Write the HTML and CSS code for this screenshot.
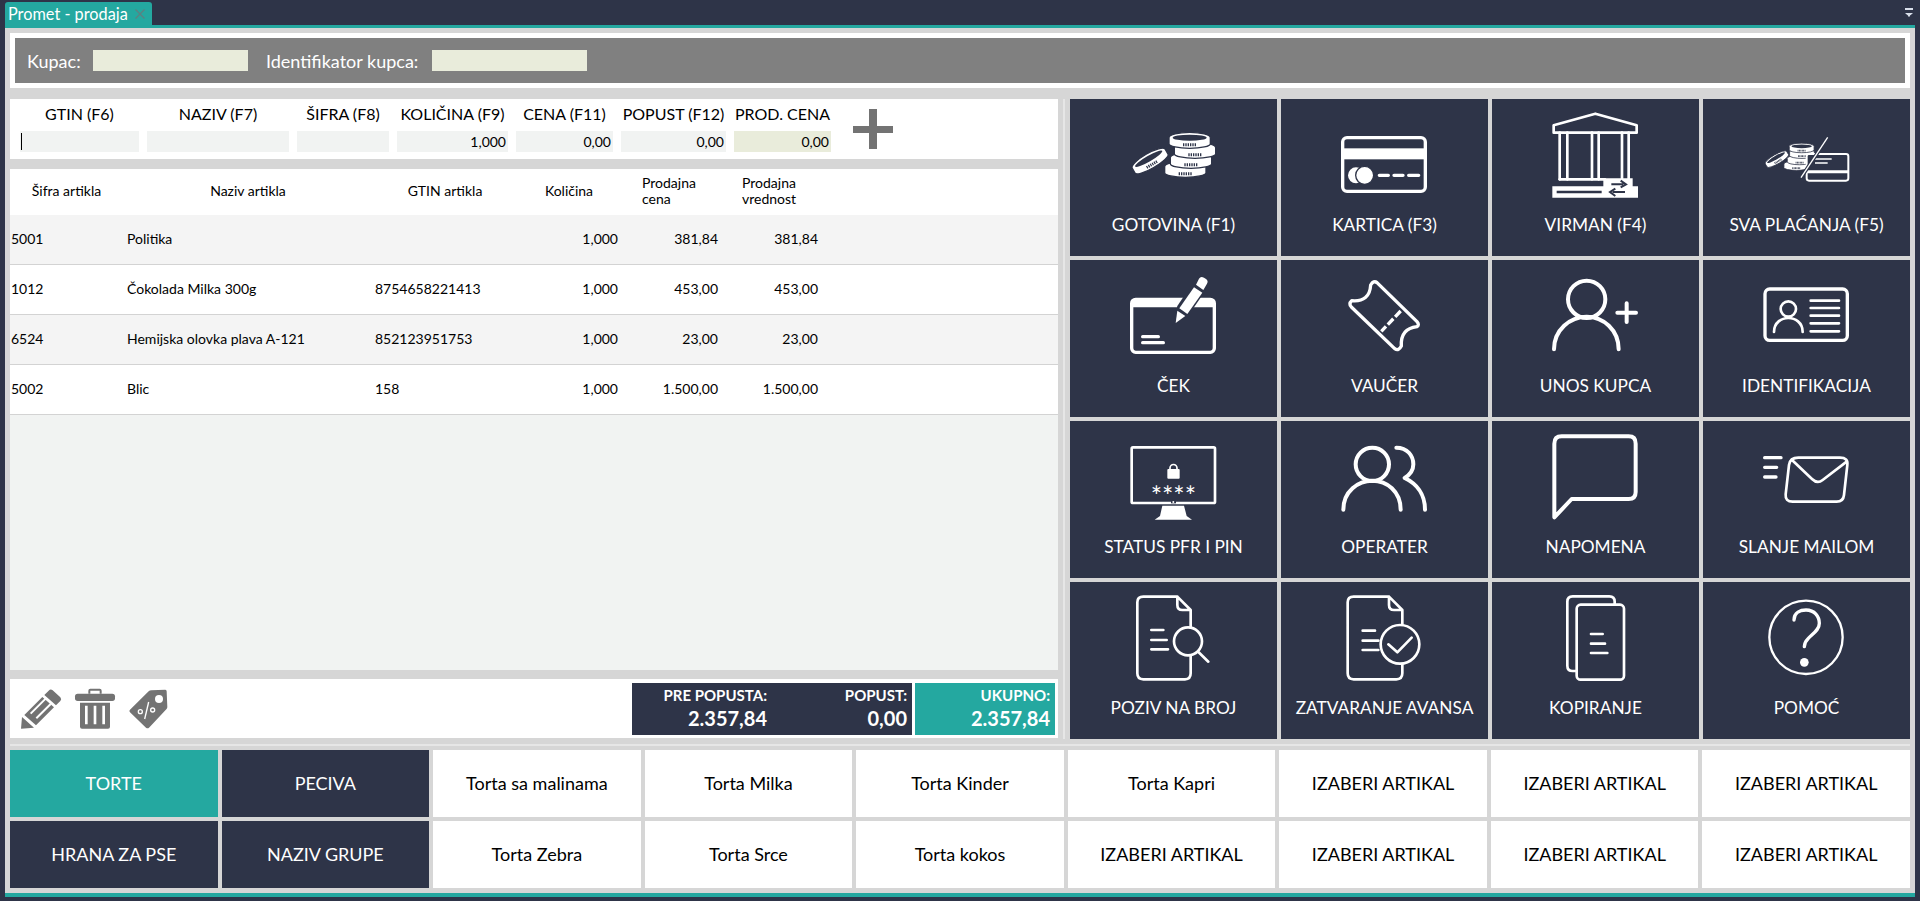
FILE: index.html
```html
<!DOCTYPE html>
<html lang="sr">
<head>
<meta charset="utf-8">
<title>Promet - prodaja</title>
<link rel="stylesheet" href="styles.css">
</head>
<body>
<svg class="defs" width="0" height="0" aria-hidden="true">
  <defs>
    <g id="coin">
      <path d="M-62 0A62 16 0 0 1 62 0V18A62 14 0 0 1-62 18Z" fill="#fff" stroke="#2e3448" stroke-width="4"/>
      <ellipse cx="0" cy="0" rx="51" ry="9" fill="#2e3448"/>
      <path d="M-20 21H20" stroke="#2e3448" stroke-width="9" stroke-dasharray="4 3"/>
    </g>
    <g id="coin-low">
      <path d="M-62 0A62 16 0 0 1 62 0V18A62 14 0 0 1-62 18Z" fill="#fff" stroke="#2e3448" stroke-width="4"/>
      <path d="M-20 21H20" stroke="#2e3448" stroke-width="9" stroke-dasharray="4 3"/>
    </g>
  </defs>
</svg>
<header class="tabbar">
  <div class="tab"><span>Promet - prodaja</span><svg class="tab-close" viewBox="0 0 10 10"><path d="M0.500 0.500 9.500 9.500M9.500 0.500 0.500 9.500"/></svg></div>
  <svg class="menu-icon" viewBox="0 0 8 9"><path d="M0 0H8V2H0ZM0 5H8L5.500 7.200H5V8.500H3V7.200H2.500Z" fill="#d9dfea"/></svg>
</header>
<main class="frame">
  <section class="customer">
    <div class="customer-inner">
      <label class="customer-label">Kupac:</label><div class="customer-field"></div>
      <label class="customer-label second">Identifikator kupca:</label><div class="customer-field"></div>
    </div>
  </section>
  <div class="main">
    <div class="left">
      <section class="entry">
        <div class="entry-col w1"><div class="entry-label">GTIN (F6)</div><div class="field"><i class="caret"></i></div></div>
        <div class="entry-col w2"><div class="entry-label">NAZIV (F7)</div><div class="field"></div></div>
        <div class="entry-col w3"><div class="entry-label">ŠIFRA (F8)</div><div class="field"></div></div>
        <div class="entry-col w4"><div class="entry-label">KOLIČINA (F9)</div><div class="field">1,000</div></div>
        <div class="entry-col w5"><div class="entry-label">CENA (F11)</div><div class="field">0,00</div></div>
        <div class="entry-col w6"><div class="entry-label">POPUST (F12)</div><div class="field">0,00</div></div>
        <div class="entry-col w7"><div class="entry-label">PROD. CENA</div><div class="field tinted">0,00</div></div>
        <div class="plus"></div>
      </section>
      <section class="items">
        <div class="row head">
          <div class="c">Šifra artikla</div><div class="c">Naziv artikla</div><div class="c">GTIN artikla</div><div class="c">Količina</div><div class="hl">Prodajna<br>cena</div><div class="hl">Prodajna<br>vrednost</div>
        </div>
        <div class="row odd"><div class="first">5001</div><div class="name">Politika</div><div class="gtin"></div><div class="r">1,000</div><div class="r">381,84</div><div class="r">381,84</div></div>
        <div class="row"><div class="first">1012</div><div class="name">Čokolada Milka 300g</div><div class="gtin">8754658221413</div><div class="r">1,000</div><div class="r">453,00</div><div class="r">453,00</div></div>
        <div class="row odd"><div class="first">6524</div><div class="name">Hemijska olovka plava A-121</div><div class="gtin">852123951753</div><div class="r">1,000</div><div class="r">23,00</div><div class="r">23,00</div></div>
        <div class="row"><div class="first">5002</div><div class="name">Blic</div><div class="gtin">158</div><div class="r">1,000</div><div class="r">1.500,00</div><div class="r">1.500,00</div></div>
      </section>
      <section class="actions">
        <svg class="act" viewBox="60 85 127 125"><path d="M146 93Q152 87 158 92L181 113Q186 119 181 124L168 137 133 106ZM127 112 162 143 108 197 73 166ZM66 172 102 204 63 207Z" fill="#737373"/><path d="M92 162 137 117M109 176 152 133" stroke="#fff" stroke-width="6"/></svg>
        <svg class="act" viewBox="222 85 127 125"><path d="M268 102V93Q268 90 271 90H299Q302 90 302 93V102" fill="none" stroke="#737373" stroke-width="6"/><rect x="225" y="102" width="120" height="22" rx="8" fill="#737373"/><path d="M240 129H330V201Q330 207 324 207H246Q240 207 240 201Z" fill="#737373"/><path d="M259 138V194M285 138V194M311 138V194" stroke="#fff" stroke-width="8"/></svg>
        <svg class="act" viewBox="385 85 127 125"><path d="M447 95Q450 92 455 92L497 90Q501 90 501 95L503 142Q503 146 500 149L448 204Q444 208 439 204L391 158Q387 154 391 150Z" fill="#737373"/><circle cx="478" cy="118" r="12" fill="#fff"/><circle cx="422" cy="156" r="6" fill="none" stroke="#fff" stroke-width="4"/><circle cx="459" cy="151" r="6" fill="none" stroke="#fff" stroke-width="4"/><path d="M447 127 435 178" stroke="#fff" stroke-width="4"/></svg>
        <div class="totals">
          <div class="total dark"><b>PRE POPUSTA:</b><strong>2.357,84</strong></div>
          <div class="total dark"><b>POPUST:</b><strong>0,00</strong></div>
          <div class="total teal"><b>UKUPNO:</b><strong>2.357,84</strong></div>
        </div>
      </section>
    </div>
    <div class="vsplit"></div>
    <nav class="pay">
      <button class="pay-btn"><svg viewBox="30 27 621 375"><use href="#coin-low" transform="translate(376 230)"/><use href="#coin-low" transform="translate(393 203)"/><use href="#coin-low" transform="translate(405 173)"/><use href="#coin" transform="translate(389 143)"/><use href="#coin" transform="translate(266 206) rotate(-30) scale(.92 .95)"/></svg><span>GOTOVINA (F1)</span></button>
      <button class="pay-btn"><svg viewBox="663 27 621 375"><rect x="848" y="143" width="248" height="161" rx="13" class="ln10"/><rect x="848" y="175" width="248" height="33" fill="#fff"/><circle cx="888" cy="256" r="24" fill="#fff"/><circle cx="914" cy="256" r="27" fill="#fff" stroke="#2e3448" stroke-width="4"/><path d="M958 256H985M1002 256H1029M1046 256H1076" class="ln10"/></svg><span>KARTICA (F3)</span></button>
      <button class="pay-btn"><svg viewBox="6 27 621 375"><path d="M191 106 316 71 440 106V128H191Z" class="ln8"/><path d="M209 128V268M232 128V268M306 128V268M326 128V268M396 128V268M416 128V268" class="ln8"/><path d="M209 268H345" class="ln8"/><path d="M187 289H340V265H428V289H444V323H187Z" fill="#fff"/><path d="M200 306H335" stroke="#2e3448" stroke-width="8"/><path d="M364 283H400M392 272 408 283 392 292M405 306H368M376 296 360 306 376 318" fill="none" stroke="#2e3448" stroke-width="6"/></svg><span>VIRMAN (F4)</span></button>
      <button class="pay-btn"><svg viewBox="639 27 621 375"><use href="#coin-low" transform="translate(919 222) scale(.6)"/><use href="#coin-low" transform="translate(929 205) scale(.6)"/><use href="#coin-low" transform="translate(936 186) scale(.6)"/><use href="#coin" transform="translate(935 169) scale(.6)"/><use href="#coin" transform="translate(858 203) rotate(-30) scale(.6)"/><rect x="950" y="192" width="125" height="80" rx="7" fill="#2e3448" stroke="#fff" stroke-width="6"/><path d="M950 245H1075" stroke="#fff" stroke-width="9"/><path d="M975 207H1025M975 219H1013" stroke="#fff" stroke-width="4"/><path d="M1012 144 934 262" stroke="#2e3448" stroke-width="11"/><path d="M1013 142 933 263" stroke="#fff" stroke-width="4"/></svg><span>SVA PLAĆANJA (F5)</span></button>

      <button class="pay-btn"><svg viewBox="30 510 621 375"><rect x="215" y="628" width="248" height="159" rx="12" class="ln10"/><path d="M215 640Q215 624 232 624H446Q463 624 463 640V652H215Z" fill="#fff"/><path d="M248 740H295M248 758H310" class="ln10"/><path d="M338 706 352 648 410 562 446 588 388 672Z" fill="#2e3448"/><path d="M347 699 352 662 376 678Z" fill="#fff"/><path d="M358 655 402 592 427 608 382 672Z" fill="#fff"/><path d="M408 584 417 566Q422 558 432 563L438 567Q446 573 441 581L430 600Z" fill="#fff"/></svg><span>ČEK</span></button>
      <button class="pay-btn"><svg viewBox="663 510 621 375"><path d="M951 578 1071 695Q1079 704 1071 710 1021 716 1024 768 1016 784 1004 776L874 651Q865 641 875 632 929 637 932 585 941 570 951 578Z" class="ln10"/><path d="M1022 663 964 724" class="ln10 dash"/></svg><span>VAUČER</span></button>
      <button class="pay-btn"><svg viewBox="6 510 621 375"><circle cx="290" cy="628" r="56" class="ln12"/><path d="M192 778C192 720 240 680 290 680 340 680 386 720 386 778M382 668H438M410 640V696" class="ln12"/></svg><span>UNOS KUPCA</span></button>
      <button class="pay-btn"><svg viewBox="639 510 621 375"><rect x="825" y="597" width="247" height="154" rx="14" class="ln10"/><circle cx="895" cy="657" r="23" class="ln8"/><path d="M852 726C852 697 875 684 895 684 915 684 938 697 938 726M962 632H1047M962 654H1047M962 677H1047M962 700H1047M962 724H1047" class="ln8"/></svg><span>IDENTIFIKACIJA</span></button>

      <button class="pay-btn"><svg viewBox="30 18 621 375"><rect x="215" y="97" width="250" height="167" rx="4" class="ln8"/><rect x="322" y="162" width="37" height="29" rx="3" fill="#fff"/><path d="M330 164V159A10 10 0 0 1 351 159V164" fill="none" stroke="#fff" stroke-width="5"/><text x="340" y="274" class="stars">****</text><path d="M333 258H348V265H333Z" fill="#2e3448"/><circle cx="340" cy="261" r="3" fill="#fff"/><path d="M307 272H372L380 303 396 314H284L300 303Z" fill="#fff"/></svg><span>STATUS PFR I PIN</span></button>
      <button class="pay-btn"><svg viewBox="663 18 621 375"><circle cx="937" cy="148" r="50" class="ln12"/><path d="M850 284C850 228 895 197 937 197 980 197 1022 228 1022 284M1009 98C1042 98 1060 122 1060 148 1060 166 1049 180 1034 189 1068 205 1095 236 1095 284" class="ln12"/></svg><span>OPERATER</span></button>
      <button class="pay-btn"><svg viewBox="6 18 621 375"><path d="M193 307V86Q193 64 215 64H416Q437 64 437 86V231Q437 252 416 252H245Z" class="ln12"/></svg><span>NAPOMENA</span></button>
      <button class="pay-btn"><svg viewBox="639 18 621 375"><path d="M824 128H873M824 157H860M824 186H858" class="ln10"/><path d="M925 128H1050Q1075 128 1072 150L1062 240Q1060 260 1040 260H908Q885 260 887 238L897 150Q900 128 925 128Z" class="ln8"/><path d="M906 135 966 192Q982 208 998 195L1070 140" class="ln8"/></svg><span>SLANJE MAILOM</span></button>

      <button class="pay-btn"><svg viewBox="30 501 621 375"><path d="M392 638V585L352 545H250Q232 545 232 562V775Q232 793 250 793H375Q392 793 392 775V722M352 545V570Q352 585 367 585H392M274 645H310M274 675H320M274 703H324M416 712 445 740" class="ln8"/><circle cx="384" cy="679" r="42" class="ln8"/></svg><span>POZIV NA BROJ</span></button>
      <button class="pay-btn"><svg viewBox="663 501 621 375"><path d="M1027 628V585L987 545H881Q863 545 863 562V775Q863 793 881 793H1009Q1027 793 1027 775V748M987 545V570Q987 585 1002 585H1027M908 647H945M908 677H955M908 705H955M985 688 1012 712 1055 668" class="ln8"/><circle cx="1020" cy="688" r="58" class="ln8"/></svg><span>ZATVARANJE AVANSA</span></button>
      <button class="pay-btn"><svg viewBox="6 501 621 375"><path d="M258 768H248Q232 768 232 752V560Q232 544 248 544H358Q374 544 374 560V568" class="ln8"/><rect x="260" y="569" width="142" height="225" rx="12" class="ln8"/><path d="M303 657H338M303 686H345M303 714H352" class="ln8"/></svg><span>KOPIRANJE</span></button>
      <button class="pay-btn"><svg viewBox="639 501 621 375"><circle cx="948" cy="667" r="110" class="ln7"/><path d="M912 615C912 592 932 585 948 585 974 585 988 604 988 625 988 645 970 655 955 670 945 680 943 685 943 695" class="ln10"/><circle cx="943" cy="742" r="13" fill="#fff"/></svg><span>POMOĆ</span></button>
    </nav>
  </div>
  <div class="hsplit"></div>
  <section class="catalog">
    <button class="cat active">TORTE</button>
    <button class="cat group">PECIVA</button>
    <button class="cat">Torta sa malinama</button>
    <button class="cat">Torta Milka</button>
    <button class="cat">Torta Kinder</button>
    <button class="cat">Torta Kapri</button>
    <button class="cat">IZABERI ARTIKAL</button>
    <button class="cat">IZABERI ARTIKAL</button>
    <button class="cat">IZABERI ARTIKAL</button>
    <button class="cat group">HRANA ZA PSE</button>
    <button class="cat group">NAZIV GRUPE</button>
    <button class="cat">Torta Zebra</button>
    <button class="cat">Torta Srce</button>
    <button class="cat">Torta kokos</button>
    <button class="cat">IZABERI ARTIKAL</button>
    <button class="cat">IZABERI ARTIKAL</button>
    <button class="cat">IZABERI ARTIKAL</button>
    <button class="cat">IZABERI ARTIKAL</button>
  </section>
</main>
</body>
</html>
```
FILE: styles.css
```css
* { box-sizing: border-box; }
html, body { margin: 0; height: 901px; overflow: hidden; }
body { background: #2e3448; font-family: Lato, "Noto Sans", sans-serif; color: #000; }
.defs { position: absolute; }

.tabbar { height: 25px; padding: 2px 7px 0 5px; display: flex; justify-content: space-between; }
.tab { width: 147px; height: 23px; background: #24a8a0; border-radius: 3px 3px 0 0; color: #fff; font-size: 16.300px; line-height: 23px; padding-left: 3px; display: flex; align-items: center; gap: 7px; }
.tab-close { width: 10px; height: 10px; flex: none; fill: none; stroke: #5e7f80; stroke-width: 1.300; }
.menu-icon { width: 8px; height: 9px; margin-top: 6px; }

.frame { margin: 0 5px; height: 872px; background: #d6d6d6; border-top: 3px solid #24a8a0; border-bottom: 4px solid #24a8a0; padding: 5px 5px 0; }

.customer { background: #fff; height: 55px; padding: 5px; }
.customer-inner { background: #808080; height: 45px; display: flex; align-items: center; padding-left: 12px; color: #fff; font-size: 18px; }
.customer-label { width: 66px; }
.customer-label.second { width: 166px; margin-left: 18px; white-space: nowrap; }
.customer-field { width: 155px; height: 21px; background: #e9ecdb; }

.main { display: flex; height: 640px; margin-top: 11px; }
.left { width: 1048px; display: flex; flex-direction: column; }
.vsplit { width: 2px; margin: 0 5px; background: #e6e6e6; }

.entry { height: 60px; background: #fff; display: flex; gap: 8px; padding: 0 0 0 10px; }
.entry-col { display: flex; flex-direction: column; align-items: center; }
.w1 { width: 119px; } .w2 { width: 142px; } .w3 { width: 92px; } .w4 { width: 111px; }
.w5 { width: 97px; } .w6 { width: 105px; } .w7 { width: 97px; }
.entry-label { height: 32px; line-height: 30px; font-size: 16px; white-space: nowrap; }
.field { width: 100%; height: 21px; background: #f1f3f2; font-size: 14px; line-height: 21px; text-align: right; padding: 0 2px 0 1px; display: flex; align-items: center; justify-content: flex-end; }
.field.tinted { background: #e9ecdb; }
.caret { display: block; width: 1px; height: 17px; background: #000; margin-right: auto; }
.plus { width: 40px; height: 40px; margin: 10px 0 0 14px; background:
  linear-gradient(#737373, #737373) center / 100% 7px no-repeat,
  linear-gradient(#737373, #737373) center / 8px 100% no-repeat; }

.items { height: 501px; margin-top: 10px; background: #f1f3f2; font-size: 14px; }
.row { display: grid; grid-template-columns: 113px 250px 144px 104px 100px 100px 1fr; height: 50px; padding-bottom: 2px; align-items: center; background: #fff; border-bottom: 1px solid #d3d3d3; }
.row.odd { background: #f4f4f4; }
.row.head { height: 46px; border-bottom: 0; line-height: 16.500px; }
.c { text-align: center; }
.hl { padding-left: 21px; }
.first { padding-left: 1px; }
.name { padding-left: 4px; }
.gtin { padding-left: 2px; }
.r { text-align: right; padding-right: 3px; }

.actions { height: 59px; margin-top: 9px; background: #fff; display: flex; padding: 0 3px 0 10px; gap: 11.670px; align-items: flex-start; }
.act { width: 42.330px; height: 41.670px; margin-top: 9.330px; flex: none; }
.totals { display: flex; margin: 4px 0 0 auto; }
.total { width: 140px; height: 52px; padding: 3px 5px 0 0; color: #fff; text-align: right; display: flex; flex-direction: column; }
.total b { font-size: 15px; line-height: 18px; font-weight: 700; }
.total strong { font-size: 20px; line-height: 29px; font-weight: 700; }
.dark { background: #2e3448; }
.teal { background: #24a8a0; margin-left: 3px; }

.pay { flex: 1; display: grid; grid-template-columns: repeat(4, 207px); grid-auto-rows: 157px; gap: 4px; }
.pay-btn { border: 0; padding: 0; background: #2e3448; color: #fff; font: 17.300px Lato, "Noto Sans", sans-serif; display: flex; flex-direction: column; align-items: center; }
.pay-btn svg { width: 207px; height: 125px; display: block; flex: none; }
.pay-btn span { line-height: 20px; margin-top: -9px; white-space: nowrap; }
.ln7, .ln8, .ln10, .ln12 { fill: none; stroke: #fff; stroke-linecap: round; stroke-linejoin: round; }
.ln7 { stroke-width: 7; } .ln8 { stroke-width: 8; } .ln10 { stroke-width: 10; } .ln12 { stroke-width: 12; }
.dash { stroke-linecap: butt; stroke-dasharray: 24 8; }
.stars { font: 80px Lato, sans-serif; fill: #fff; text-anchor: middle; }

.hsplit { height: 2px; margin-top: 5px; background: #e6e6e6; }
.catalog { display: grid; grid-template-columns: repeat(9, 1fr); grid-auto-rows: 67px; gap: 4px; margin-top: 4px; }
.cat { border: 0; padding: 0 0 1px; background: #fff; color: #000; font: 18px Lato, "Noto Sans", sans-serif; }
.cat.group { background: #2e3448; color: #fff; }
.cat.active { background: #24a8a0; color: #fff; }
```
